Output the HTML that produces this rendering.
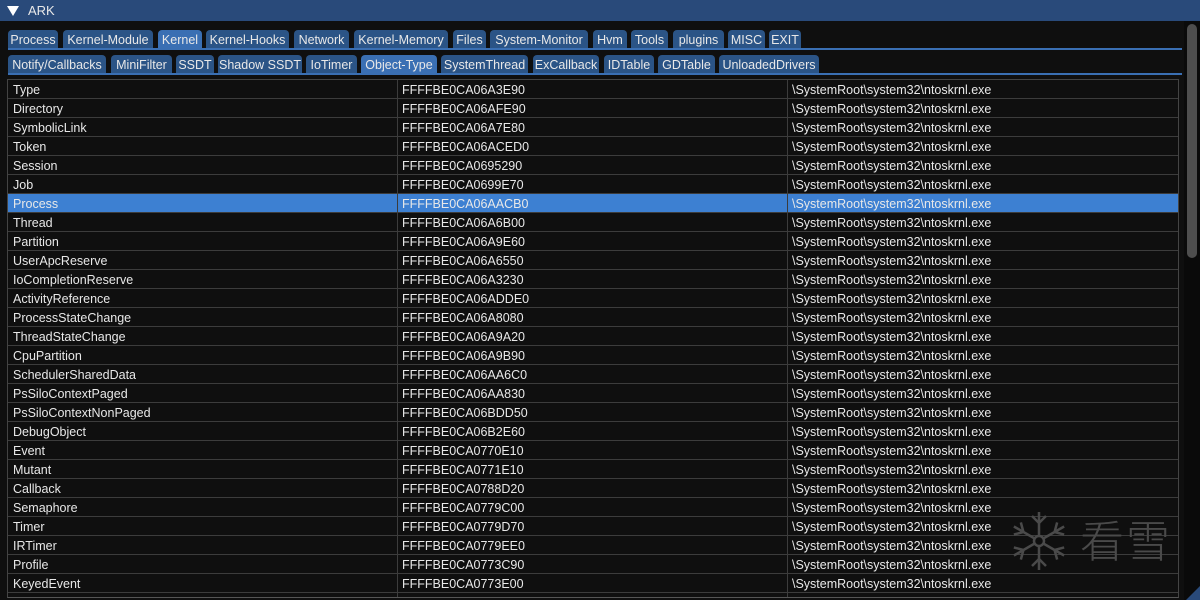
<!DOCTYPE html>
<html><head><meta charset="utf-8"><style>
*{margin:0;padding:0;box-sizing:border-box}
body{width:1200px;height:600px;background:#0f0f0f;font-family:"Liberation Sans","DejaVu Sans",sans-serif;font-size:12.5px;color:#e8e8e8;position:relative;overflow:hidden}
.title{position:absolute;left:0;top:0;width:1200px;height:21px;background:#294a7a;}
.title span{position:absolute;left:28px;top:3px;font-size:13px}
.tri{position:absolute;left:7px;top:6px;width:0;height:0;border-left:6px solid transparent;border-right:6px solid transparent;border-top:10px solid #fff}
.tab{position:absolute;height:19px;background:#2b5486;border-radius:4px 4px 0 0;padding:3px 0 0 0;text-align:center;white-space:nowrap;font-size:12.5px}
.tab.a{background:#3a6fb3}
.ul{position:absolute;left:8px;width:1174px;height:2px;background:#3a6fb3}
.tbl{position:absolute;left:7px;top:79px;width:1172px;height:519px;border:1px solid #444;border-bottom:1px solid #555;overflow:hidden}
.r{position:absolute;left:0;width:1170px;height:19px;border-bottom:1px solid #3c3c3c}
.r.s{background:#3d80d2;}
.c{position:absolute;top:3px;white-space:nowrap}
.v{position:absolute;top:0;width:1px;height:519px;background:#3c3c3c}
.sb{position:absolute;left:1184px;top:21px;width:16px;height:579px;background:#0a0a0a}
.th{position:absolute;left:1187px;top:24px;width:10px;height:234px;border-radius:5px;background:#4e4e4e}
.wm{position:absolute;left:1080px;top:508px;font-family:"Noto Sans CJK SC",sans-serif;font-size:44px;color:#4a4a4a;font-weight:300;letter-spacing:2px;line-height:60px}
</style></head><body>
<div class="title"><div class="tri"></div><span>ARK</span></div>
<div class="tab" style="left:8px;top:30px;width:50px">Process</div>
<div class="tab" style="left:63px;top:30px;width:90px">Kernel-Module</div>
<div class="tab a" style="left:158px;top:30px;width:44px">Kernel</div>
<div class="tab" style="left:206px;top:30px;width:83px">Kernel-Hooks</div>
<div class="tab" style="left:294px;top:30px;width:55px">Network</div>
<div class="tab" style="left:354px;top:30px;width:94px">Kernel-Memory</div>
<div class="tab" style="left:453px;top:30px;width:33px">Files</div>
<div class="tab" style="left:490px;top:30px;width:98px">System-Monitor</div>
<div class="tab" style="left:593px;top:30px;width:34px">Hvm</div>
<div class="tab" style="left:631px;top:30px;width:37px">Tools</div>
<div class="tab" style="left:673px;top:30px;width:51px">plugins</div>
<div class="tab" style="left:728px;top:30px;width:37px">MISC</div>
<div class="tab" style="left:769px;top:30px;width:32px">EXIT</div>
<div class="ul" style="top:48px"></div>
<div class="tab" style="left:8px;top:55px;width:98px">Notify/Callbacks</div>
<div class="tab" style="left:111px;top:55px;width:61px">MiniFilter</div>
<div class="tab" style="left:176px;top:55px;width:38px">SSDT</div>
<div class="tab" style="left:218px;top:55px;width:84px">Shadow SSDT</div>
<div class="tab" style="left:306px;top:55px;width:51px">IoTimer</div>
<div class="tab a" style="left:361px;top:55px;width:76px">Object-Type</div>
<div class="tab" style="left:441px;top:55px;width:87px">SystemThread</div>
<div class="tab" style="left:533px;top:55px;width:66px">ExCallback</div>
<div class="tab" style="left:604px;top:55px;width:50px">IDTable</div>
<div class="tab" style="left:658px;top:55px;width:57px">GDTable</div>
<div class="tab" style="left:719px;top:55px;width:100px">UnloadedDrivers</div>
<div class="ul" style="top:73px"></div>
<div class="tbl" id="t"></div>
<div class="wm">看雪</div>
<svg style="position:absolute;left:1008px;top:510px" width="62" height="62" viewBox="-31 -31 62 62" stroke="#4a4a4a" stroke-width="2.5" fill="none">
<g id="arm"><line x1="0" y1="-5" x2="0" y2="-29"/><line x1="0" y1="-18" x2="-7" y2="-25"/><line x1="0" y1="-18" x2="7" y2="-25"/></g>
<use href="#arm" transform="rotate(60)"/><use href="#arm" transform="rotate(120)"/><use href="#arm" transform="rotate(180)"/><use href="#arm" transform="rotate(240)"/><use href="#arm" transform="rotate(300)"/>
<circle r="5"/></svg>
<div class="sb"></div><div class="th"></div>
<svg style="position:absolute;left:1186px;top:586px" width="14" height="14"><polygon points="14,0 14,14 0,14" fill="#294a7a"/></svg>
<script>
var d=[["Type","A3E90"],["Directory","AFE90"],["SymbolicLink","A7E80"],["Token","ACED0"],["Session","95290"],["Job","99E70"],["Process","AACB0"],["Thread","A6B00"],["Partition","A9E60"],["UserApcReserve","A6550"],["IoCompletionReserve","A3230"],["ActivityReference","ADDE0"],["ProcessStateChange","A8080"],["ThreadStateChange","A9A20"],["CpuPartition","A9B90"],["SchedulerSharedData","AA6C0"],["PsSiloContextPaged","AA830"],["PsSiloContextNonPaged","BDD50"],["DebugObject","B2E60"],["Event","770E10",1],["Mutant","771E10",1],["Callback","788D20",1],["Semaphore","779C00",1],["Timer","779D70",1],["IRTimer","779EE0",1],["Profile","773C90",1],["KeyedEvent","773E00",1],["WindowStation","77F0C0",1]];
var h="";d.forEach(function(r,i){var a=r[2]?"FFFFBE0CA0"+r[1]:"FFFFBE0CA06"+r[1];
h+='<div class="r'+(i==6?' s':'')+'" style="top:'+(i*19)+'px"><span class="c" style="left:5px">'+r[0]+'</span><span class="c" style="left:394px">'+a+'</span><span class="c" style="left:784px">\\SystemRoot\\system32\\ntoskrnl.exe</span></div>';});
h+='<div class="v" style="left:389px"></div><div class="v" style="left:779px"></div>';
document.getElementById("t").innerHTML=h;
</script>
</body></html>
